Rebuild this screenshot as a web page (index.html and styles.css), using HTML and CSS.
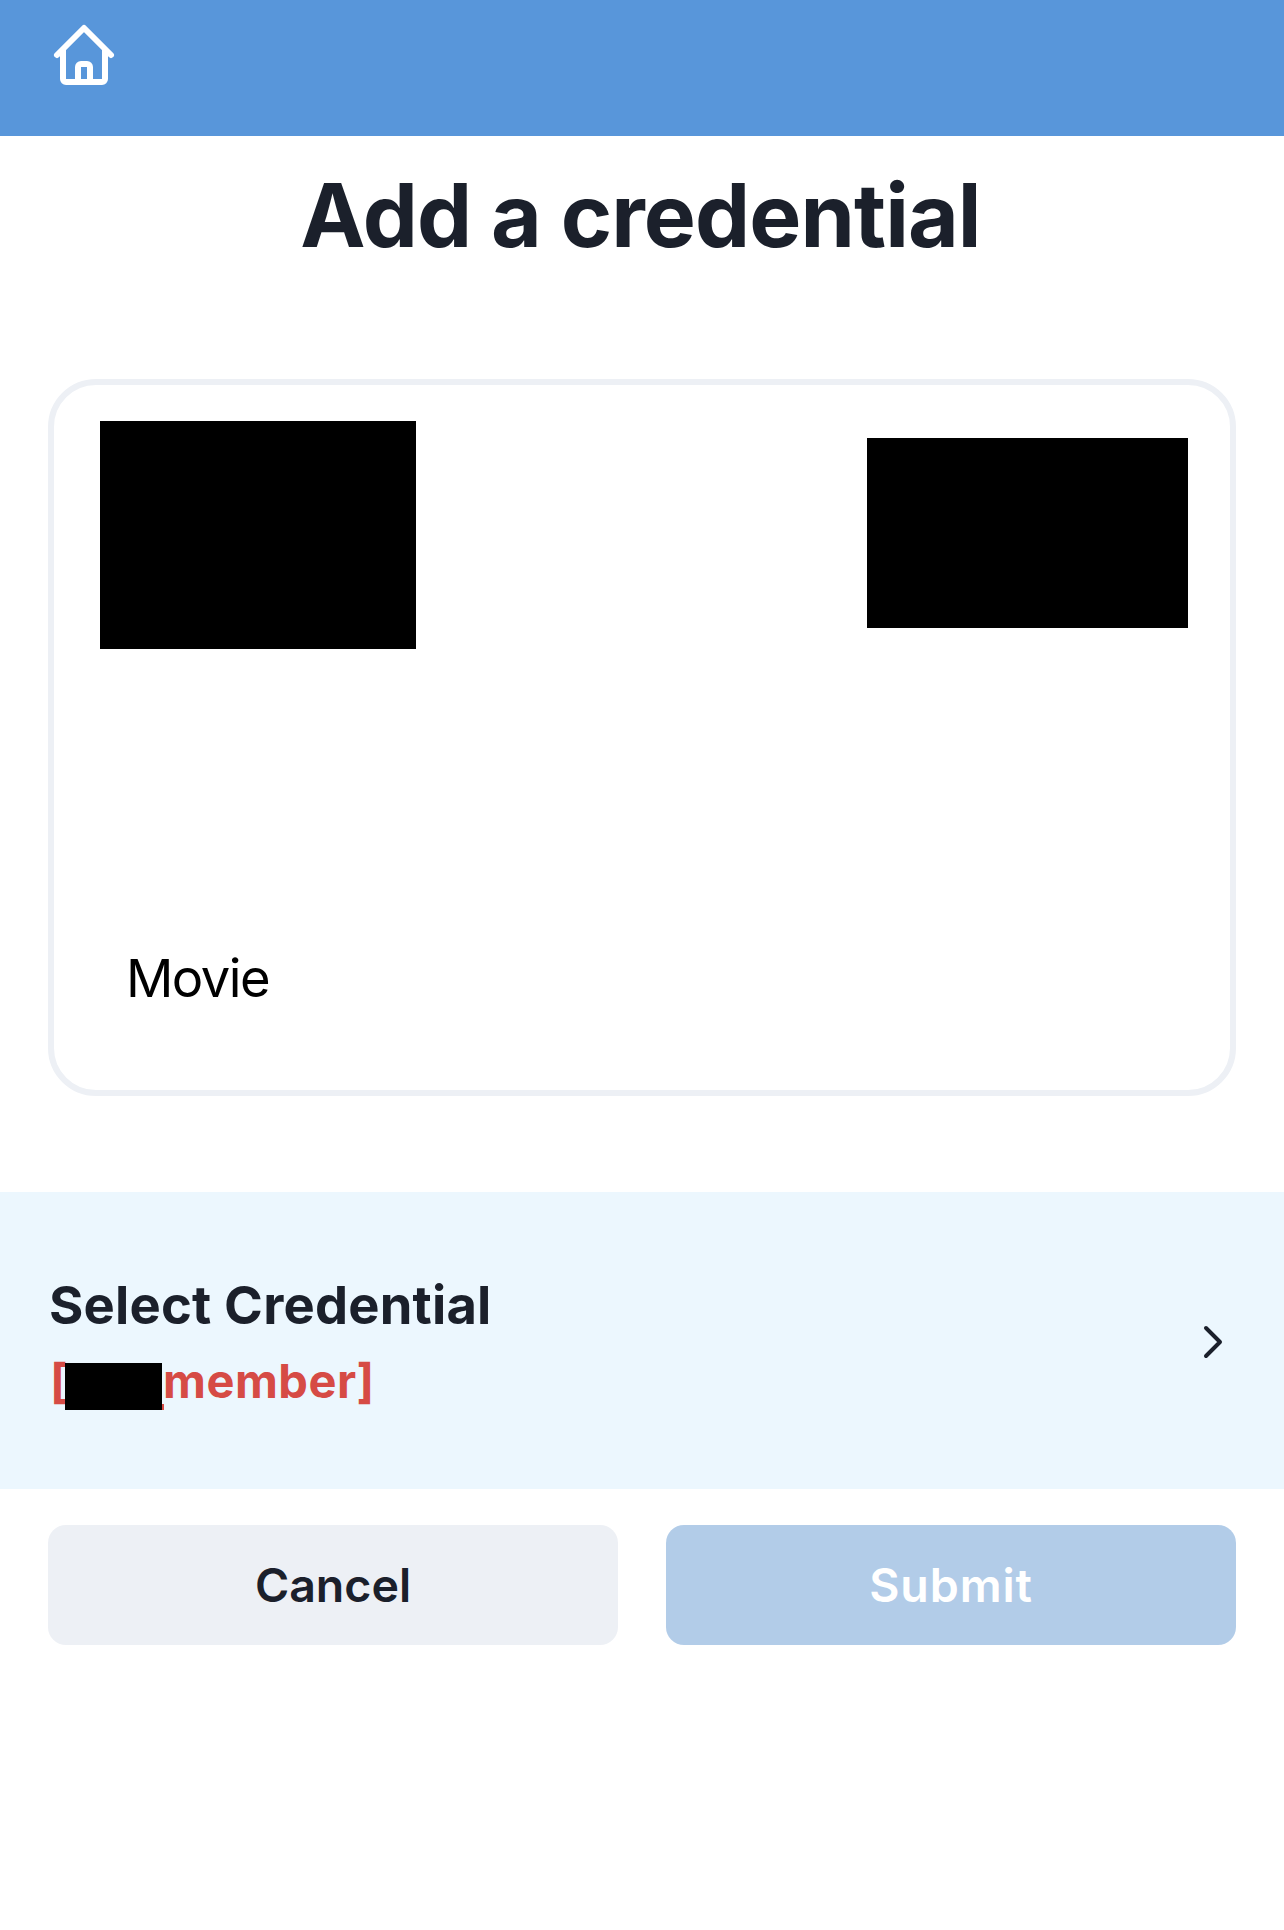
FILE: index.html
```html
<!DOCTYPE html>
<html lang="en">
<head>
<meta charset="utf-8">
<title>Add a credential</title>
<link rel="stylesheet" href="styles.css">
</head>
<body>
<header class="topbar">
  <svg class="home" viewBox="0 0 72 72" fill="none" stroke="#fff" stroke-width="6" stroke-linecap="round" stroke-linejoin="round">
    <path d="M9 37 36 10l27 27M15 32v29a3 3 0 0 0 3 3h36a3 3 0 0 0 3-3V32"/>
    <path d="M30 63V49a3 3 0 0 1 3-3h6a3 3 0 0 1 3 3v14"/>
  </svg>
</header>
<main>
  <h1 class="title">Add a credential</h1>
  <section class="card">
    <div class="logos">
      <div class="logo logo-left"></div>
      <div class="logo logo-right"></div>
    </div>
    <p class="card-name">Movie</p>
  </section>
  <section class="select">
    <div>
      <h2 class="select-title">Select Credential</h2>
      <p class="select-value"><span class="bracket">[</span><span class="mask"></span><span class="tail"></span><span class="member">member]</span></p>
    </div>
    <svg class="chevron" viewBox="0 0 24 36" fill="none" stroke="#1b202b" stroke-width="4" stroke-linecap="round" stroke-linejoin="round"><path d="m4 4 14 14L4 32"/></svg>
  </section>
  <div class="actions">
    <button class="btn cancel">Cancel</button>
    <button class="btn submit" disabled>Submit</button>
  </div>
</main>
</body>
</html>
```
FILE: styles.css
```css
* { box-sizing: border-box; margin: 0; padding: 0; }
body { background: #fff; color: #1b202b; font-family: Inter, "Liberation Sans", sans-serif; }
.topbar { height: 136px; background: #5896da; padding: 18px 48px; }
.home { display: block; width: 72px; height: 72px; }
.title { height: 243px; padding: 25px 3px 0 0; text-align: center; font-size: 87.5px; line-height: 108px; font-weight: 700; letter-spacing: -0.92px; }
.card { height: 717px; margin: 0 48px; border: 6px solid #edf0f5; border-radius: 48px; display: flex; flex-direction: column; justify-content: space-between; padding: 36px 42px 76px 46px; }
.logos { display: flex; justify-content: space-between; align-items: flex-start; }
.logo { background: #000; }
.logo-left { width: 316px; height: 228px; }
.logo-right { width: 321px; height: 190px; margin-top: 17px; }
.card-name { padding-left: 26px; font-size: 52.5px; line-height: 72px; letter-spacing: -1.55px; color: #000; }
.select { height: 297px; margin-top: 96px; padding: 0 58px 0 48px; background: #ecf7fe; display: flex; align-items: center; justify-content: space-between; }
.select-title { padding-left: 1px; font-size: 52.5px; line-height: 80px; font-weight: 700; letter-spacing: 0.2px; }
.select-value { display: flex; align-items: center; font-size: 47px; line-height: 72px; font-weight: 700; color: #d64b45; }
.bracket { width: 17px; padding-left: 2px; }
.mask { width: 97px; height: 47px; margin-top: 11px; background: #000; }
.tail { width: 2px; height: 6px; margin-top: 53px; background: #d64b45; }
.member { margin-left: -1px; letter-spacing: 0.5px; }
.chevron { width: 24px; height: 36px; margin-top: 3px; }
.actions { display: grid; grid-template-columns: 1fr 1fr; gap: 48px; padding: 36px 48px; }
.btn { height: 120px; border: 0; border-radius: 18px; font: 600 46.5px/60px Inter, "Liberation Sans", sans-serif; }
.cancel { background: #edf0f5; color: #1b202b; }
.submit { background: #b2cce8; color: #fff; letter-spacing: 0.9px; }
```
